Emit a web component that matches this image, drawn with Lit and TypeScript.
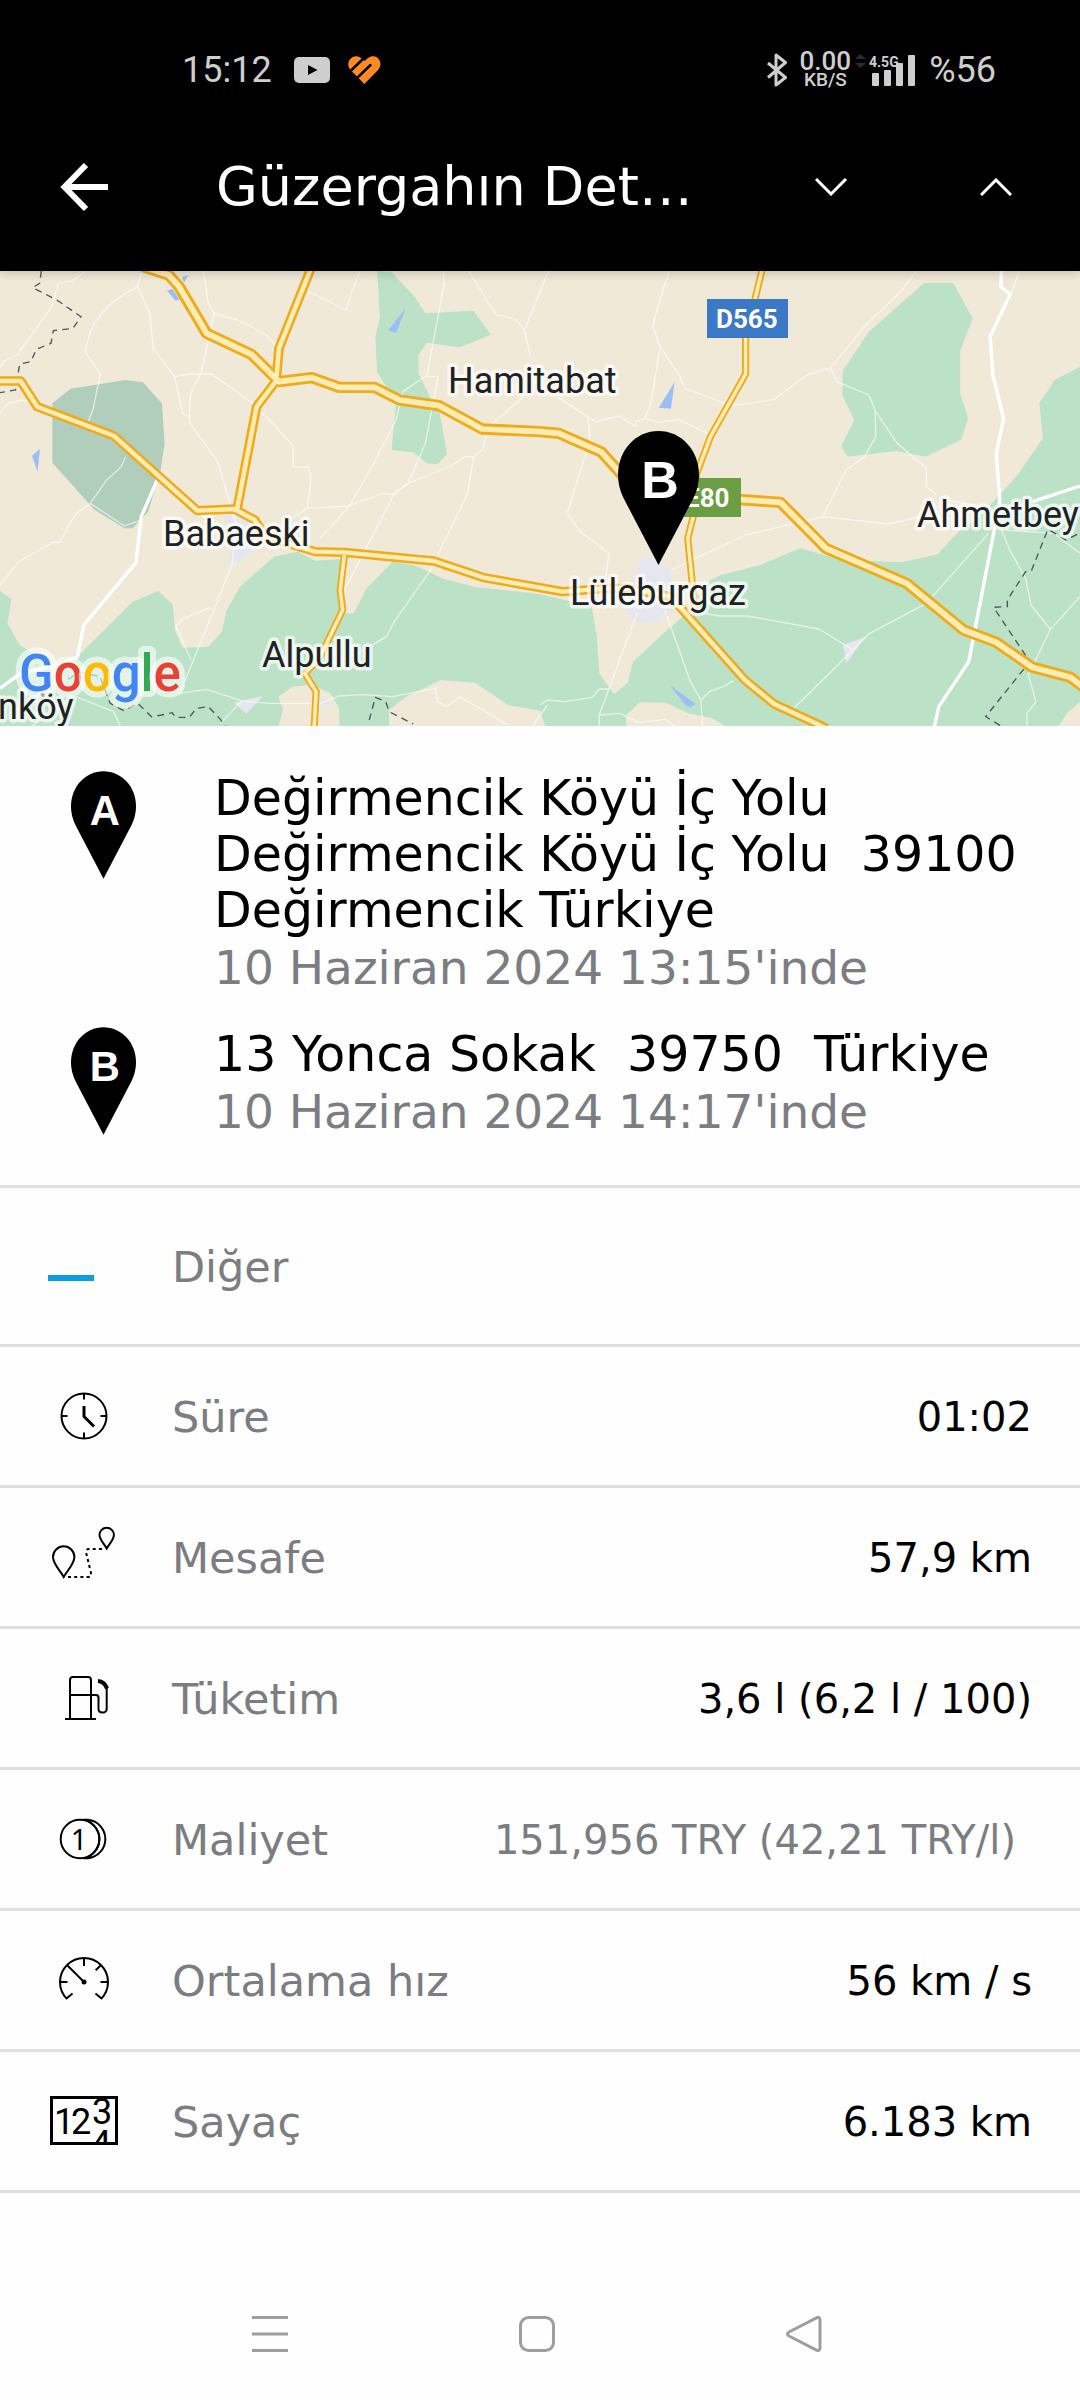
import { LitElement, html, svg, css, nothing, TemplateResult, SVGTemplateResult } from "lit";
import { customElement, property } from "lit/decorators.js";

const pinShape =
  "M40.5 0C63 0 81 19 81 44C81 52 79 60 75.500 67L40.500 134L5.500 67C2 60 0 52 0 44C0 19 18 0 40.500 0Z";

const pinContent = (letter: string): SVGTemplateResult => svg`
  <path d=${pinShape} fill="#000" />
  <text x="42" y="67" text-anchor="middle" font-family="'Liberation Sans', Arial, sans-serif"
    font-weight="700" font-size="52" fill="#fff">${letter}</text>`;

/* ---------- icons ---------- */

const icon = (content: SVGTemplateResult): TemplateResult => html`
  <svg class="icon" viewBox="0 0 80 80" width="80" height="80" fill="none" stroke="#000"
    stroke-width="2" aria-hidden="true">${content}</svg>`;

const dashIcon = icon(svg`<rect x="4" y="49" width="46" height="6" fill="#0aa0da" stroke="none" />`);

const clockIcon = icon(svg`
  <circle cx="40" cy="40" r="22.500" />
  <path d="M40 17.500v6M40 56.500v6M17.500 40h6M56.500 40h6" />
  <path d="M40 30v10.500l10 10" stroke-width="3" />`);

const distanceIcon = icon(svg`
  <path d="M19.700 60C16 53 9 47 9 40a10.700 10.700 0 0 1 21.400 0C30.400 47 23.500 53 19.700 60Z" />
  <path d="M62.700 31.500C60 26.500 55.500 22.500 55.500 18a7.200 7.200 0 0 1 14.400 0C69.900 22.500 65.500 26.500 62.700 31.500Z" />
  <path d="M24 60H44.500Q47.500 60 47 56L42.200 36Q41.500 32 45 32H60" stroke-dasharray="3 3.200" />`);

const fuelIcon = icon(svg`
  <path d="M26 61V22Q26 19 29 19H44Q47 19 47 22V61M21 61H52" />
  <path d="M26 37H52Q54.500 37 54.500 39.500V51Q54.500 54.500 58.500 54.500T62.700 51V28" />
  <path d="M54 23Q60.500 23.500 63 30.500" stroke-width="4" />`);

const costIcon = icon(svg`
  <circle cx="36" cy="40" r="19.300" />
  <path d="M39 20.800H44A19.300 19.300 0 0 1 44 59.200H39M44 21.500Q55.500 29 55.500 40T44 58.500" stroke-width="2" />
  <text x="35" y="51" text-anchor="middle" font-family="'Noto Sans', sans-serif" font-size="29"
    fill="#000" stroke="none">1</text>`);

const speedIcon = icon(svg`
  <path d="M23 59A24 24 0 1 1 57 59" />
  <path d="M22.500 58.500L28.500 53.500M57.500 58.500L51.500 53.500M16 42h7.500M56.500 42H64M40 18v8M57 25l-5.300 5.300M23.500 25.500L40 42" />
  <circle cx="40" cy="42" r="2.500" fill="#000" stroke="none" />`);

const odometerIcon = icon(svg`
  <clipPath id="dial"><rect x="8" y="17" width="64" height="46" /></clipPath>
  <rect x="7.500" y="16.500" width="65" height="46" stroke-width="3" />
  <g clip-path="url(#dial)" font-family="Roboto, sans-serif" font-size="36" fill="#000" stroke="none">
    <text x="10" y="53">1</text>
    <text x="27" y="53">2</text>
    <text x="48" y="43">3</text>
    <text x="47" y="75">4</text>
  </g>`);

/* ---------- map ---------- */

const mapArt = svg`
  <rect width="1080" height="455" fill="#f0e9d8" />
  <g transform="scale(0.34439 0.33333) translate(0 -33)">
    <g fill="#bbe2c6">
      <path d="M1095 33L1103 170L1090 230L1095 335L1150 430L1137 570L1200 577L1240 610L1270 613L1298 582L1275 450L1250 415L1215 340V285L1240 248L1335 262L1425 224L1375 152L1235 160L1200 105L1135 35Z" />
      <path d="M2683 69H2768L2824 175L2788 275V400L2811 475L2790 540L2688 590L2603 573L2461 590L2443 558L2480 480L2446 405V335L2523 215Z" />
      <path d="M0 993L33 1018L22 1090L57 1155L150 1215L225 1190L385 1025L460 993L502 1035L508 1110L530 1163L605 1160L645 1115L657 1052L697 980L795 890L865 875L915 902L995 897L980 1000L992 1060H1027L1065 985L1140 905L1200 915L1290 957L1385 982L1568 1002L1718 1040L1733 1130L1740 1240L1783 1303L1823 1268L1838 1205L1943 1105L1978 1075L2063 960L2093 945L2208 915L2323 865L2448 900L2618 907L2723 883L2783 815L2838 775L2908 700L2958 640L3028 535L3018 430L3063 360L3136 320V1400H0Z" />
    </g>
    <g fill="#f0e9d8">
      <path d="M808 1310L850 1280L905 1275L960 1300L985 1345V1400H808L822 1350Z" />
      <path d="M1130 1400V1350L1180 1310L1280 1260L1380 1268L1475 1335L1568 1352L1584 1400Z" />
      <path d="M1818 1400V1365L1858 1327L1933 1328L1998 1360L2068 1375L2110 1400Z" />
      <path d="M3073 1400L3098 1360L3136 1325V1400Z" />
    </g>
    <path fill="#b1cdbc" d="M152 430L205 386L365 360L415 367L470 430L478 550L465 640L430 755L385 805H362L275 750L152 608Z" />
    <g fill="#9bbff4">
      <path d="M1128 210L1178 145L1150 220ZM485 92L500 86L521 118L510 122ZM528 52L547 45L534 68ZM93 587L116 567L109 635ZM1913 443L1959 366L1948 446ZM1944 1275L2020 1332L2005 1341L1990 1335Z" />
    </g>
    <g fill="#e6e7ee">
      <path d="M648 765L700 755L740 800L735 870L700 905L665 910L675 850Z" />
      <path d="M680 1328L763 1308L715 1362ZM930 1310L968 1325L950 1340H925Z" />
      <path d="M1868 885L1950 930L1955 1050L1905 1090L1845 1085L1815 1050L1845 940Z" />
      <path d="M2448 1155L2512 1130L2458 1210Z" />
    </g>

    <g fill="none" stroke="#fff" stroke-opacity="0.6" stroke-width="4" stroke-linejoin="round">
      <path d="M0 325L10 303L50 285L150 140L170 70L215 60L245 35M412 33L400 80L435 160L445 265L507 350L530 460L550 470L552 490L632 605L685 790L675 910L615 1065L520 1305" />
      <path d="M400 80Q300 130 262 215L247 275L291 342L272 440L255 490M590 33L605 130L622 160L585 335L552 405L550 470M507 350L545 342L615 342L740 435L850 555L852 622L895 620L903 660L892 745" />
      <path d="M622 160L690 180L770 222L810 265M890 92L1005 150L1020 100L1045 35M850 775L892 745L1010 738L1113 700L1143 703L1185 670L1310 618L1350 590L1375 590L1400 570L1420 500L1520 410" />
      <path d="M1287 33L1290 70L1240 345L1170 395L1150 480L1090 600L1015 738L930 835M1240 350H1272L1235 550L1185 670L1143 705L1000 990M1360 33L1440 163L1498 178L1523 210L1540 290M1523 210L1592 33M1375 590L1358 700L1250 930L1145 1085L1122 1130L1040 1180L960 1210" />
      <path d="M365 590L352 620L310 660L262 730L362 798L405 782M262 730L218 765L172 848L155 846L55 905L0 975M0 460L20 432L65 420L100 430" />
      <path d="M610 1043L535 1075L510 1098L555 1200M520 1300L600 1288L700 1322L780 1330H930L985 1308L1050 1304L1140 1310L1265 1285L1270 1325L1297 1340L1335 1310L1475 1395M1545 1400L1590 1335M220 1310L330 1355L350 1400M90 1400L215 1310M640 1390L700 1325" />
      <path d="M1943 35L1925 90L1895 198L1917 260L1975 350L1990 385L2118 435L2180 430L2248 418L2343 345L2411 323L2480 240L2500 210L2620 90L2660 35M1917 260L1890 430L1873 475M1620 412L1730 485L1798 468L1846 500V485L1873 475L1912 487L1970 478L2060 522M1707 465L1713 540L1647 760L1685 815L1768 880L1758 960" />
      <path d="M2411 323L2430 365L2523 405L2543 455L2605 550L2690 625V680L2720 705M2541 450L2543 530L2510 590L2455 632L2390 770M1950 930L2030 890L2165 825L2390 770L2580 792L2690 765L2750 720L2850 740" />
      <path d="M1990 1050L2090 1068H2170L2378 1107L2430 1140L2477 1170L2305 1345M2477 1170L2525 1120L2690 1030L2870 820M1850 1060L1740 1365V1400M1930 1050L2005 1265L2035 1320L2040 1400M2035 1320L2060 1295L2100 1280L2130 1262M1740 1365L1800 1360L1855 1388L1930 1378L1960 1400M1568 1335L1590 1320L1640 1325L1720 1312L1740 1287H1770" />
      <path d="M2908 810L2932 870L2978 955L2994 1035L3050 1108L2986 1245L3008 1325L2982 1360V1400M3050 1108L3136 1010M2920 810L3060 820L3136 880M2960 35L2935 100" />
    </g>
    <g fill="none" stroke="#fff" stroke-width="10" stroke-linejoin="round">
      <path d="M458 657L410 770L395 908L243 1095L225 1190L180 1212L60 1240L0 1285M573 752L610 780" />
      <path d="M2908 33L2906 80L2933 103L2875 230L2883 345L2914 475L2893 580L2903 720L2886 815L2813 1205L2726 1340L2713 1400M2998 725L3136 678" />
    </g>
    <g fill="none" stroke="#51585d" stroke-width="4" stroke-dasharray="20 15">
      <path d="M120 33L115 70L95 83L165 120L235 170L212 205L155 212L148 250L105 268L90 305L57 312L45 390L0 398" />
      <path d="M200 1258L230 1235L290 1250L320 1330L360 1352L400 1330L440 1370L470 1365L500 1358L510 1372H550L570 1345L605 1340L640 1378L655 1400M1072 1380L1090 1312L1120 1325L1130 1355L1200 1392" />
      <path d="M3040 815L2995 932L2978 935L2925 1020V1040L2885 1042L2990 1205L2862 1370L2910 1400M3050 812L3095 840L3130 822" />
    </g>

    ${[
      { color: "#eeab1c", wide: 34, mid: 28, slim: 21 },
      { color: "#ffecb5", wide: 17, mid: 13, slim: 10 },
    ].map(
      (road) => svg`
      <g fill="none" stroke=${road.color} stroke-linejoin="round">
        <path stroke-width=${road.slim} d="M1000 885L988 990L995 1050L925 1200L885 1240L918 1295L912 1405" />
        <path stroke-width=${road.slim} d="M2215 20L2165 235V342L2063 530L2023 640L2013 770L1997 835L2018 1050" />
        <path stroke-width=${road.mid} d="M905 20L810 265L803 350M800 365L745 440L688 750" />
        <path stroke-width=${road.mid} d="M-5 363H60L108 440L330 527L573 752L680 747L740 780L770 830L915 875L1000 877L1260 903L1405 953L1568 983L1633 995L1768 985L1818 985L1948 1010L2008 1080L2163 1260L2248 1332L2400 1405" />
        <path stroke-width=${road.wide} d="M415 20L490 45L520 80L600 220L730 283L810 365L905 353L985 382H1087L1160 420L1275 437L1400 507L1568 515L1623 520L1746 576L1828 670L2008 710L2152 719L2266 727L2398 865L2633 970L2798 1110L2893 1147L2998 1222L3108 1252L3150 1285" />
      </g>`
    )}
  </g>

  <rect x="707" y="28" width="81" height="39" fill="#3b78c6" />
  <rect x="676" y="207" width="65" height="39" fill="#6b9e43" />
  <g font-family="Roboto, sans-serif" font-size="26" font-weight="700" fill="#fff">
    <text x="716" y="57">D565</text>
    <text x="685" y="236">E80</text>
  </g>

  <g font-family="Roboto, sans-serif" font-size="36" fill="#202124" stroke="#fff" stroke-opacity="0.7"
    stroke-width="7" stroke-linejoin="round" paint-order="stroke">
    <text x="448" y="122">Hamitabat</text>
    <text x="163" y="275">Babaeski</text>
    <text x="262" y="396">Alpullu</text>
    <text x="-2" y="448">nköy</text>
    <text x="570" y="334">Lüleburgaz</text>
    <text x="917" y="256">Ahmetbey</text>
  </g>

  <text x="19" y="420" font-family="Roboto, sans-serif" font-size="51" font-weight="500" stroke="#fff"
    stroke-opacity="0.6" stroke-width="12" stroke-linejoin="round" paint-order="stroke"
    ><tspan fill="#4285f4">G</tspan><tspan fill="#e94235">o</tspan><tspan fill="#fabb05">o</tspan><tspan
    fill="#4285f4">g</tspan><tspan fill="#34a853">l</tspan><tspan fill="#e94235">e</tspan></text>

  <g transform="translate(618 160)">${pinContent("B")}</g>`;

/* ---------- elements ---------- */

@customElement("status-bar")
export class StatusBar extends LitElement {
  static styles = css`
    :host {
      display: flex;
      align-items: center;
      justify-content: space-between;
      padding: 51px 84px 13px 182px;
      background: #000;
      color: #cecece;
      font-family: Roboto, sans-serif;
      font-size: 36px;
      line-height: 38px;
    }
    .group {
      display: flex;
      align-items: center;
    }
    .app {
      margin-left: 18px;
    }
    .app.first {
      margin-left: 22px;
    }
    .speed {
      display: flex;
      flex-direction: column;
      align-items: center;
      margin: 0 4px 0 12px;
      font-weight: 500;
    }
    .rate {
      font-size: 26px;
      line-height: 20px;
    }
    .unit {
      font-size: 19px;
      line-height: 18px;
    }
    .signal {
      margin-right: 12px;
    }
  `;

  render() {
    return html`
      <div class="group">
        <span>15:12</span>
        <svg class="app first" width="36" height="26" viewBox="0 0 36 26" aria-hidden="true">
          <rect width="36" height="26" rx="5" fill="#cecece" />
          <path d="M14 8L23.500 13L14 18Z" fill="#000" />
        </svg>
        <svg class="app" width="33" height="28" viewBox="0 0 33 28" fill="none" aria-hidden="true">
          <path d="M16.300 28L4 15.500C0 12 -1 7 2 3.500C5 -0.500 10 -0.700 13.500 2.500L16.500 5L20 2C24 -1 29 0 31 3.500C33.500 7.500 32.500 11 30 14Z" fill="#ff8a1f" />
          <path d="M2 15.500L16 2" stroke="#000" stroke-width="2.500" />
          <path d="M9 22L22.500 9" stroke="#000" stroke-width="2.500" stroke-linecap="round" />
        </svg>
      </div>
      <div class="group">
        <svg width="22" height="34" viewBox="0 0 22 34" fill="none" stroke="#cecece" stroke-width="3"
          stroke-linejoin="round" aria-hidden="true">
          <path d="M2 10L19.500 24.500L10 32V2L19.500 9.500L2 24.500" />
        </svg>
        <span class="speed"><span class="rate">0.00</span><span class="unit">KB/S</span></span>
        <svg class="signal" width="62" height="34" viewBox="0 0 62 34" fill="#cecece" aria-hidden="true">
          <path d="M0 6L5.500 1L11 6ZM0 10L5.500 15L11 10Z" fill="#2b2b2b" />
          <rect x="17" y="20" width="7" height="13" rx="1" />
          <rect x="29" y="17" width="7" height="16" rx="1" />
          <rect x="41" y="10" width="7" height="23" rx="1" />
          <rect x="53" y="2" width="7" height="31" rx="1" />
          <text x="14" y="14" font-family="'Liberation Sans Narrow', Roboto, sans-serif" font-weight="700" font-size="14">4.5G</text>
        </svg>
        <span>%56</span>
      </div>
    `;
  }
}

@customElement("app-bar")
export class AppBar extends LitElement {
  @property() heading = "";

  static styles = css`
    :host {
      display: flex;
      align-items: center;
      padding: 49px 36px 48px 48px;
      background: #000;
      color: #fff;
    }
    button {
      display: grid;
      place-items: center;
      width: 96px;
      height: 72px;
      padding: 0;
      border: 0;
      background: none;
      color: inherit;
    }
    .back {
      width: 72px;
    }
    .heading {
      flex: 1;
      min-width: 0;
      margin: 0 78px 0 96px;
      overflow: hidden;
      font-size: 54px;
      font-weight: 400;
      line-height: 72px;
      text-overflow: ellipsis;
      white-space: nowrap;
    }
    .next {
      margin-left: 69px;
    }
  `;

  render() {
    return html`
      <button class="back" aria-label="Geri">
        <svg width="48" height="50" viewBox="0 0 48 50" fill="none" stroke="#fff" stroke-width="6">
          <path d="M4 25H48M26 3L4.500 25L26 47" />
        </svg>
      </button>
      <h1 class="heading">${this.heading}</h1>
      <button aria-label="Sonraki">
        <svg width="32" height="18" viewBox="0 0 32 18" fill="none" stroke="#fff" stroke-width="3">
          <path d="M1 1L16 16L31 1" />
        </svg>
      </button>
      <button class="next" aria-label="Önceki">
        <svg width="32" height="18" viewBox="0 0 32 18" fill="none" stroke="#fff" stroke-width="3">
          <path d="M1 17L16 2L31 17" />
        </svg>
      </button>
    `;
  }
}

@customElement("trip-stop")
export class TripStop extends LitElement {
  @property() letter = "";
  @property() address = "";
  @property() time = "";

  static styles = css`
    :host {
      display: flex;
      align-items: flex-start;
      gap: 78px;
    }
    .pin {
      flex: none;
    }
    .text {
      flex: 1;
      min-width: 0;
    }
    p {
      margin: 0;
    }
    .address {
      font-size: 49px;
      line-height: 56px;
      white-space: pre-wrap;
    }
    .time {
      color: #7b7d82;
      font-size: 47px;
      line-height: 58px;
    }
  `;

  render() {
    return html`
      <svg class="pin" width="65" height="108" viewBox="0 0 81 134">${pinContent(this.letter)}</svg>
      <div class="text">
        <p class="address">${this.address}</p>
        <p class="time">${this.time}</p>
      </div>
    `;
  }
}

interface Detail {
  icon: TemplateResult;
  label: string;
  value?: string;
  kind?: string;
}

const details: Detail[] = [
  { icon: dashIcon, label: "Diğer", kind: "category" },
  { icon: clockIcon, label: "Süre", value: "01:02" },
  { icon: distanceIcon, label: "Mesafe", value: "57,9 km" },
  { icon: fuelIcon, label: "Tüketim", value: "3,6 l (6,2 l / 100)" },
  { icon: costIcon, label: "Maliyet", value: "151,956 TRY (42,21 TRY/l)", kind: "muted" },
  { icon: speedIcon, label: "Ortalama hız", value: "56 km / s" },
  { icon: odometerIcon, label: "Sayaç", value: "6.183 km" },
];

@customElement("app-root")
export class AppRoot extends LitElement {
  static styles = css`
    :host {
      display: flex;
      flex-direction: column;
      min-height: 100vh;
      background: #fefefe;
      color: #000;
      font-family: "DejaVu Sans", Verdana, sans-serif;
    }
    .top {
      position: relative;
      z-index: 1;
      box-shadow: 0 2px 10px rgba(0, 0, 0, 0.2);
    }
    .map {
      display: block;
      width: 100%;
      height: auto;
    }
    .stops {
      display: flex;
      flex-direction: column;
      gap: 30px;
      padding: 45px 56px 44px 71px;
      border-bottom: 3px solid #e0e0e0;
    }
    .details {
      margin: 0;
    }
    .row {
      display: flex;
      align-items: center;
      min-height: 138px;
      padding: 0 48px 0 44px;
      border-bottom: 3px solid #e0e0e0;
    }
    .row.category {
      min-height: 156px;
    }
    .row.muted {
      padding-right: 64px;
    }
    .icon {
      flex: none;
    }
    .label {
      margin-left: 48px;
      padding-top: 2px;
      color: #7b7d82;
      font-size: 43px;
      line-height: 52px;
    }
    .value {
      margin: 0 0 0 auto;
      padding-top: 2px;
      font-size: 40px;
      line-height: 52px;
      text-align: right;
    }
    .muted .value {
      color: #7b7d82;
    }
    .keys {
      display: grid;
      grid-template-columns: repeat(3, 1fr);
      justify-items: center;
      margin-top: auto;
      padding: 28px 142px 28px 136px;
    }
    .key {
      display: grid;
      place-items: center;
      width: 76px;
      height: 76px;
      padding: 0;
      border: 0;
      background: none;
    }
  `;

  render() {
    return html`
      <header class="top">
        <status-bar></status-bar>
        <app-bar heading="Güzergahın Detayları"></app-bar>
      </header>
      <svg class="map" viewBox="0 0 1080 455" role="img" aria-label="Harita">${mapArt}</svg>
      <section class="stops">
        <trip-stop
          letter="A"
          .address=${"Değirmencik Köyü İç Yolu\nDeğirmencik Köyü İç Yolu  39100\nDeğirmencik Türkiye"}
          time="10 Haziran 2024 13:15'inde"
        ></trip-stop>
        <trip-stop
          letter="B"
          .address=${"13 Yonca Sokak  39750  Türkiye"}
          time="10 Haziran 2024 14:17'inde"
        ></trip-stop>
      </section>
      <dl class="details">
        ${details.map(
          (d) => html`
            <div class="row ${d.kind ?? ""}">
              ${d.icon}
              <dt class="label">${d.label}</dt>
              ${d.value ? html`<dd class="value">${d.value}</dd>` : nothing}
            </div>
          `
        )}
      </dl>
      <nav class="keys">
        <button class="key" aria-label="Son uygulamalar">
          <svg width="36" height="36" viewBox="0 0 36 36" stroke="#9e9e9e" stroke-width="3">
            <path d="M0 1.500H36M0 18H36M0 34.500H36" />
          </svg>
        </button>
        <button class="key" aria-label="Ana ekran">
          <svg width="36" height="36" viewBox="0 0 36 36" fill="none" stroke="#9e9e9e" stroke-width="3">
            <rect x="1.500" y="1.500" width="33" height="33" rx="8" />
          </svg>
        </button>
        <button class="key" aria-label="Geri">
          <svg width="36" height="36" viewBox="0 0 36 36" fill="none" stroke="#9e9e9e" stroke-width="3"
            stroke-linejoin="round">
            <path d="M29.500 2.300Q34 0 34 4V32Q34 36 29.500 33.700L3 20Q0 18 3 16Z" />
          </svg>
        </button>
      </nav>
    `;
  }
}
